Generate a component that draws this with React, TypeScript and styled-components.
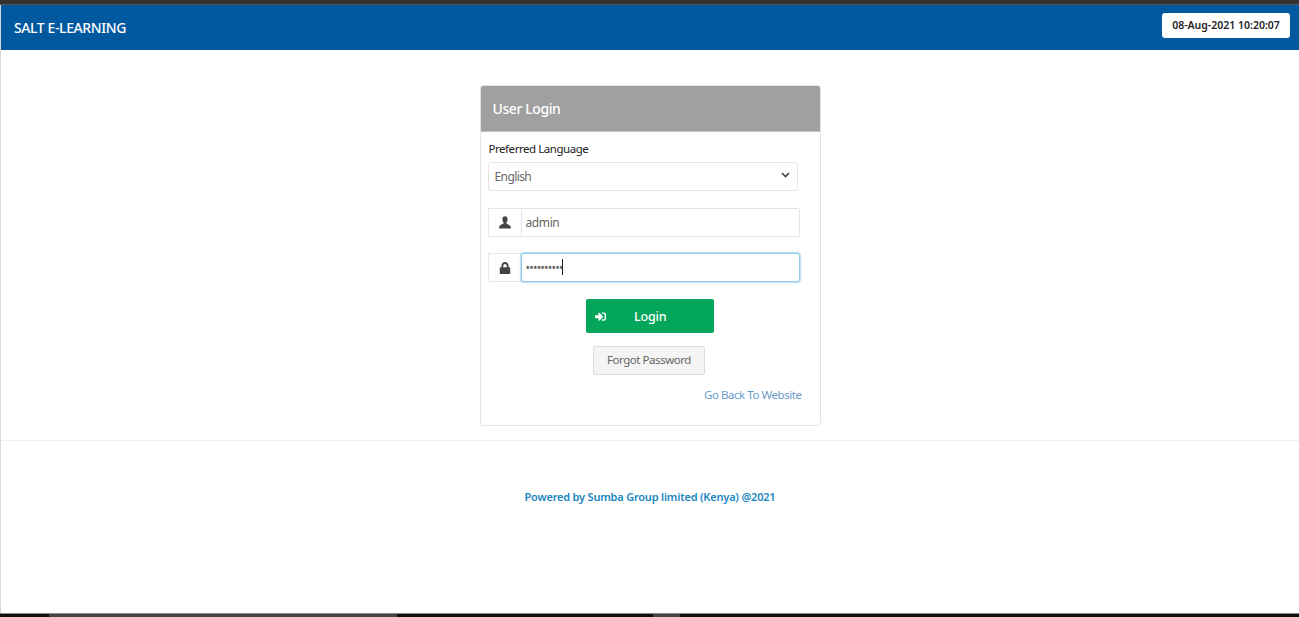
import React from "react"
import styled, { createGlobalStyle } from "styled-components"
import { FaLock, FaSignInAlt } from "react-icons/fa"

const FONT = `"Noto Sans", "Open Sans", "Liberation Sans", sans-serif`

const GlobalStyle = createGlobalStyle`
    html, body {
        margin: 0;
        padding: 0;
        height: 100%;
        overflow: hidden;
        background: #fff;
    }
    * {
        box-sizing: border-box;
    }
`

const Page = styled.div`
    display: flex;
    flex-direction: column;
    height: 100vh;
    font-family: ${FONT};
    letter-spacing: -0.3px;
`

const TopStrip = styled.div`
    height: 5px;
    flex: none;
    background: #333;
    border-bottom: 1px solid #55585c;
`

const Content = styled.div`
    flex: 1;
    display: flex;
    flex-direction: column;
    border-left: 1px solid #d8d8d8;
    min-height: 0;
`

const Header = styled.header`
    height: 45px;
    flex: none;
    background: #00599f;
    display: flex;
    align-items: flex-start;
    justify-content: space-between;
    padding: 7px 9px 0 13px;
`

const Brand = styled.div`
    color: #fff;
    font-size: 14px;
    font-weight: 500;
    line-height: 32px;
    letter-spacing: -0.4px;
`

const Clock = styled.div`
    width: 128px;
    height: 25px;
    margin-top: 1px;
    background: #fff;
    border-radius: 3px;
    color: #222;
    font-size: 10.5px;
    font-weight: 600;
    line-height: 25px;
    text-align: center;
    letter-spacing: 0;
`

const Main = styled.main`
    height: 391px;
    flex: none;
    padding-top: 35px;
    display: flex;
    justify-content: center;
    border-bottom: 1px solid #eeeeee;
`

const Card = styled.section`
    width: 341px;
    height: 341px;
    background: #fff;
    border: 1px solid #e4e4e4;
    border-radius: 3px;
    display: flex;
    flex-direction: column;
`

const CardTitle = styled.div`
    height: 46px;
    flex: none;
    background: #a0a0a0;
    border-bottom: 1px solid #c4c4c4;
    border-radius: 2px 2px 0 0;
    color: #fff;
    font-size: 14px;
    font-weight: 500;
    line-height: 45px;
    padding-left: 12px;
    letter-spacing: -0.4px;
`

const CardBody = styled.div`
    padding: 7px 7px 0 7px;
    display: flex;
    flex-direction: column;
`

const Label = styled.label`
    margin-left: 1px;
    color: #222;
    font-size: 11.5px;
    line-height: 20px;
    letter-spacing: -0.45px;
`

const SelectBox = styled.div`
    width: 310px;
    height: 29px;
    margin-top: 3px;
    border: 1px solid #e4e4e8;
    border-radius: 3px;
    display: flex;
    align-items: center;
    justify-content: space-between;
    padding: 0 7px 0 6px;
    color: #666;
    font-size: 12px;
    letter-spacing: -0.6px;
`

const SelectArrow = styled.svg`
    margin-top: -4px;
`

const InputGroup = styled.div<{ $top: number }>`
    display: flex;
    width: 312px;
    height: 29px;
    flex: none;
    margin-top: ${({ $top }) => $top}px;
`

const Addon = styled.span`
    width: 33px;
    flex: none;
    border: 1px solid #e8e8e8;
    border-right: none;
    display: flex;
    align-items: center;
    justify-content: center;
    color: #444;
    font-size: 12px;
`

const FieldWrap = styled.div`
    position: relative;
    flex: 1;
    min-width: 0;
`

const Field = styled.input<{ $focused?: boolean }>`
    width: 100%;
    height: 100%;
    outline: none;
    padding: 0 4px;
    font-family: ${FONT};
    font-size: 12px;
    letter-spacing: ${({ $focused }) => ($focused ? "-0.8px" : "-0.4px")};
    color: #666;
    background: #fff;
    border: 1px solid ${({ $focused }) => ($focused ? "#93cbe9" : "#e4e4e8")};
    border-radius: ${({ $focused }) => ($focused ? "3px" : "0 2px 2px 0")};
    box-shadow: ${({ $focused }) => ($focused ? "0 0 0 1px rgba(147, 203, 233, 0.45), 0 0 3px rgba(102, 175, 233, 0.5)" : "none")};
`

const Caret = styled.span`
    position: absolute;
    left: 41px;
    top: 6px;
    width: 1px;
    height: 16px;
    background: #222;
`

const Actions = styled.div`
    display: flex;
    flex-direction: column;
    align-items: center;
`

const LoginButton = styled.button`
    width: 128px;
    height: 34px;
    margin-top: 17px;
    border: none;
    border-radius: 2px;
    background: #03a65a;
    color: #fff;
    font-family: ${FONT};
    font-size: 12.5px;
    font-weight: 500;
    letter-spacing: -0.2px;
    display: flex;
    align-items: center;
    padding: 0 0 0 9px;
`

const LoginText = styled.span`
    margin-left: 28px;
`

const ForgotButton = styled.button`
    width: 112px;
    height: 29px;
    margin-top: 13px;
    margin-right: 2px;
    border: 1px solid #dcdcdc;
    border-radius: 2px;
    background: #f4f4f4;
    color: #666;
    font-family: ${FONT};
    font-size: 11.5px;
    letter-spacing: -0.45px;
    padding: 0 0 2px;
`

const BackLink = styled.a`
    align-self: flex-end;
    margin-top: 12px;
    margin-right: 11px;
    color: #6a9cc9;
    font-size: 11.5px;
    line-height: 16px;
    letter-spacing: -0.45px;
    text-decoration: none;
`

const Footer = styled.footer`
    flex: 1;
    padding-top: 48px;
    text-align: center;
    color: #1b86c0;
    font-size: 11px;
    font-weight: 600;
    line-height: 16px;
    letter-spacing: -0.2px;
`

const BottomBar = styled.div`
    height: 4px;
    flex: none;
    background: #0e0e0e;
    border-top: 1px solid #8a8a8a;
    display: flex;
`

const BarTab = styled.span<{ $left: number; $width: number }>`
    margin-left: ${({ $left }) => $left}px;
    width: ${({ $width }) => $width}px;
    background: #444;
`

function UserGlyph() {
    return (
        <svg width="12" height="13" viewBox="0 0 12 13" fill="currentColor">
            <path d="M6 0.3C4.3 0.3 3.4 1.5 3.4 3.2c0 1.3 0.5 2.6 1.1 3.3 0.2 0.4 0.1 1-0.3 1.3C3.2 8.5 0.6 9.1 0.3 10.6L0 12.6h12l-0.3-2C11.4 9.1 8.8 8.5 7.8 7.8c-0.4-0.3-0.5-0.9-0.3-1.3 0.6-0.7 1.1-2 1.1-3.3C8.6 1.5 7.7 0.3 6 0.3z" />
        </svg>
    )
}

export default function App() {
    return (
        <Page>
            <GlobalStyle />
            <TopStrip />
            <Content>
                <Header>
                    <Brand>SALT E-LEARNING</Brand>
                    <Clock>08-Aug-2021 10:20:07</Clock>
                </Header>
                <Main>
                    <Card>
                        <CardTitle>User Login</CardTitle>
                        <CardBody>
                            <Label>Preferred Language</Label>
                            <SelectBox>
                                English
                                <SelectArrow width="9" height="6" viewBox="0 0 9 6" fill="none" stroke="#444" strokeWidth="1.6">
                                    <path d="M1 1l3.5 3.5L8 1" />
                                </SelectArrow>
                            </SelectBox>
                            <InputGroup $top={17}>
                                <Addon><UserGlyph /></Addon>
                                <FieldWrap>
                                    <Field type="text" defaultValue="admin" />
                                </FieldWrap>
                            </InputGroup>
                            <InputGroup $top={16}>
                                <Addon><FaLock size={12} /></Addon>
                                <FieldWrap>
                                    <Field type="password" defaultValue="adminadmin" $focused />
                                    <Caret />
                                </FieldWrap>
                            </InputGroup>
                            <Actions>
                                <LoginButton type="button">
                                    <FaSignInAlt size={11} />
                                    <LoginText>Login</LoginText>
                                </LoginButton>
                                <ForgotButton type="button">Forgot Password</ForgotButton>
                                <BackLink href="#">Go Back To Website</BackLink>
                            </Actions>
                        </CardBody>
                    </Card>
                </Main>
                <Footer>Powered by Sumba Group limited (Kenya) @2021</Footer>
            </Content>
            <BottomBar>
                <BarTab $left={49} $width={348} />
                <BarTab $left={256} $width={27} />
            </BottomBar>
        </Page>
    )
}
